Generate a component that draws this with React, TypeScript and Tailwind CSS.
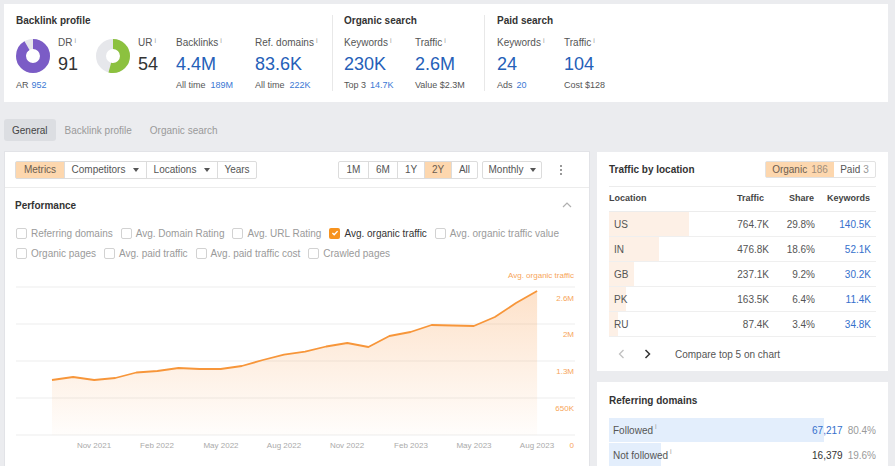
import React from "react";

function Info() {
  return <span className="align-top text-[7px] leading-[8px] ml-[2px] text-[#a0a0a0]">i</span>;
}

function Donut({ pct, color }: { pct: number; color: string }) {
  const r = 12;
  const c = 2 * Math.PI * r;
  return (
    <svg width="34" height="34" viewBox="0 0 34 34" className="shrink-0">
      <circle cx="17" cy="17" r={r} fill="none" stroke="#e6e7eb" strokeWidth="10" />
      <circle
        cx="17"
        cy="17"
        r={r}
        fill="none"
        stroke={color}
        strokeWidth="10"
        strokeDasharray={`${c * pct} ${c}`}
        transform="rotate(-90 17 17)"
      />
    </svg>
  );
}

function Tri() {
  return (
    <svg width="6" height="4" viewBox="0 0 6 4">
      <path d="M0 0H6L3 4Z" fill="#555" />
    </svg>
  );
}

function Metric({
  label,
  value,
  sub,
  w,
}: {
  label: string;
  value: string;
  sub: React.ReactNode;
  w: string;
}) {
  return (
    <div className={w}>
      <div className="text-[10px] leading-[12px] text-[#555]">
        {label}
        <Info />
      </div>
      <div className="mt-[4px] text-[18px] leading-[22px] text-[#2560b8]">{value}</div>
      <div className="mt-[4px] text-[9px] leading-[12px] text-[#555]">{sub}</div>
    </div>
  );
}

function Check({ label, checked }: { label: string; checked?: boolean }) {
  return (
    <div className="flex items-center gap-[4px]">
      {checked ? (
        <span className="w-[11px] h-[11px] rounded-[2px] bg-[#f7931e] flex items-center justify-center">
          <svg width="8" height="8" viewBox="0 0 8 8">
            <path d="M1.4 4.1 L3.2 5.8 L6.6 2.1" stroke="white" strokeWidth="1.4" fill="none" />
          </svg>
        </span>
      ) : (
        <span className="w-[11px] h-[11px] rounded-[2px] border border-[#d2d2d2] bg-white" />
      )}
      <span className={checked ? "text-[#333]" : "text-[#9a9a9a]"}>{label}</span>
    </div>
  );
}

const ys = [381, 378, 381, 379, 373.5, 372, 369, 370, 370, 367, 361, 355.6, 352.6, 347.5, 344, 348, 337, 333, 326, 326.5, 327, 318, 304, 292];

function Chart() {
  const pts = ys.map((y, i) => [47 + 21.09 * i, y - 263]);
  const line = pts.map((p, i) => `${i === 0 ? "M" : "L"}${p[0].toFixed(1)} ${p[1].toFixed(1)}`).join(" ");
  const area = `${line} L${pts[pts.length - 1][0].toFixed(1)} 173 L${pts[0][0].toFixed(1)} 173 Z`;
  const grid = [25, 62, 99, 136, 173];
  const yl = [
    ["2.6M", 39],
    ["2M", 75],
    ["1.3M", 112],
    ["650K", 149],
    ["0", 186],
  ];
  const xl = [
    ["Nov 2021", 89],
    ["Feb 2022", 152],
    ["May 2022", 216],
    ["Aug 2022", 279],
    ["Nov 2022", 342],
    ["Feb 2023", 406],
    ["May 2023", 469],
    ["Aug 2023", 532],
  ];
  return (
    <svg width="585" height="203" viewBox="0 0 585 203" style={{ fontFamily: "'Liberation Sans', Arial, sans-serif" }}>
      <defs>
        <linearGradient id="ag" x1="0" y1="25" x2="0" y2="173" gradientUnits="userSpaceOnUse">
          <stop offset="0" stopColor="#f9a155" stopOpacity="0.32" />
          <stop offset="1" stopColor="#f9a155" stopOpacity="0.02" />
        </linearGradient>
      </defs>
      {grid.map((g) => (
        <line key={g} x1="11" x2="570" y1={g} y2={g} stroke="#ededed" strokeWidth="1" />
      ))}
      <path d={area} fill="url(#ag)" />
      <path d={line} fill="none" stroke="#f7963a" strokeWidth="1.8" strokeLinejoin="round" />
      <text x="569" y="16" textAnchor="end" fontSize="8" fill="#f7a55a">
        Avg. organic traffic
      </text>
      {yl.map(([t, y]) => (
        <text key={t as string} x="569" y={y as number} textAnchor="end" fontSize="8" fill="#f7a55a">
          {t}
        </text>
      ))}
      {xl.map(([t, x]) => (
        <text key={t as string} x={x as number} y="186" textAnchor="middle" fontSize="8" fill="#aaaaaa">
          {t}
        </text>
      ))}
    </svg>
  );
}

const rows = [
  ["US", "764.7K", "29.8%", "140.5K", 29.8],
  ["IN", "476.8K", "18.6%", "52.1K", 18.6],
  ["GB", "237.1K", "9.2%", "30.2K", 9.2],
  ["PK", "163.5K", "6.4%", "11.4K", 6.4],
  ["RU", "87.4K", "3.4%", "34.8K", 3.4],
];

export default function App() {
  return (
    <div className="w-[895px] h-[466px] overflow-hidden bg-[#ebecef] px-[4px] pt-[4px] font-['Liberation_Sans',Arial,sans-serif] text-[#333]">
      {/* Top summary card */}
      <div className="w-[884px] h-[98px] bg-white flex pl-[12px] pt-[11px] pb-[11px]">
        <div className="w-[316px]">
          <div className="text-[10px] leading-[12px] font-bold text-[#333]">Backlink profile</div>
          <div className="flex mt-[10px]">
            <div className="w-[80px]">
              <div className="flex items-center gap-[8px] h-[38px]">
                <Donut pct={0.91} color="#7b5cc6" />
                <div>
                  <div className="text-[10px] leading-[12px] text-[#555]">
                    DR
                    <Info />
                  </div>
                  <div className="mt-[4px] text-[18px] leading-[22px] text-[#333]">91</div>
                </div>
              </div>
              <div className="mt-[4px] text-[9px] leading-[12px] text-[#555]">
                AR<span className="ml-[3px] text-[#3a78d4]">952</span>
              </div>
            </div>
            <div className="w-[80px]">
              <div className="flex items-center gap-[8px] h-[38px]">
                <Donut pct={0.54} color="#8cc13f" />
                <div>
                  <div className="text-[10px] leading-[12px] text-[#555]">
                    UR
                    <Info />
                  </div>
                  <div className="mt-[4px] text-[18px] leading-[22px] text-[#333]">54</div>
                </div>
              </div>
            </div>
            <Metric
              w="w-[79px]"
              label="Backlinks"
              value="4.4M"
              sub={
                <>
                  All time<span className="ml-[5px] text-[#3a78d4]">189M</span>
                </>
              }
            />
            <Metric
              w="w-[70px]"
              label="Ref. domains"
              value="83.6K"
              sub={
                <>
                  All time<span className="ml-[5px] text-[#3a78d4]">222K</span>
                </>
              }
            />
          </div>
        </div>
        <div className="w-[152px] border-l border-[#e8e8e8] pl-[11px]">
          <div className="text-[10px] leading-[12px] font-bold text-[#333]">Organic search</div>
          <div className="flex mt-[10px]">
            <Metric
              w="w-[72px]"
              label="Keywords"
              value="230K"
              sub={
                <>
                  Top 3<span className="ml-[4px] text-[#3a78d4]">14.7K</span>
                </>
              }
            />
            <Metric w="w-[70px]" label="Traffic" value="2.6M" sub="Value $2.3M" />
          </div>
        </div>
        <div className="border-l border-[#e8e8e8] pl-[12px]">
          <div className="text-[10px] leading-[12px] font-bold text-[#333]">Paid search</div>
          <div className="flex mt-[10px]">
            <Metric
              w="w-[67px]"
              label="Keywords"
              value="24"
              sub={
                <>
                  Ads<span className="ml-[4px] text-[#3a78d4]">20</span>
                </>
              }
            />
            <Metric w="w-[70px]" label="Traffic" value="104" sub="Cost $128" />
          </div>
        </div>
      </div>

      {/* Tabs */}
      <div className="flex mt-[17px] h-[22px] text-[10px]">
        <div className="px-[8px] flex items-center bg-[#dcdee2] rounded-[3px] text-[#444]">General</div>
        <div className="px-[9px] flex items-center text-[#9a9a9a]">Backlink profile</div>
        <div className="px-[9px] flex items-center text-[#9a9a9a]">Organic search</div>
      </div>

      {/* Main row */}
      <div className="flex gap-[7px] mt-[10px] items-start">
        {/* Left card */}
        <div className="w-[586px] h-[330px] bg-white border border-[#e2e3e7]">
          <div className="h-[36px] flex items-center border-b border-[#ececec] pl-[10px]">
            <div className="flex h-[18px] border border-[#dcdcdc] rounded-[2px] text-[10px] text-[#555]">
              <div className="w-[48px] bg-[#fdd7ae] flex items-center justify-center text-[#6b5d50]">Metrics</div>
              <div className="w-[82px] border-l border-[#dcdcdc] flex items-center justify-center gap-[8px]">
                Competitors
                <Tri />
              </div>
              <div className="w-[71px] border-l border-[#dcdcdc] flex items-center justify-center gap-[8px]">
                Locations
                <Tri />
              </div>
              <div className="w-[39px] border-l border-[#dcdcdc] flex items-center justify-center">Years</div>
            </div>
            <div className="ml-auto flex h-[18px] border border-[#dcdcdc] rounded-[2px] text-[10px] text-[#555]">
              <div className="w-[29px] flex items-center justify-center">1M</div>
              <div className="w-[29px] border-l border-[#dcdcdc] flex items-center justify-center">6M</div>
              <div className="w-[27px] border-l border-[#dcdcdc] flex items-center justify-center">1Y</div>
              <div className="w-[27px] border-l border-[#dcdcdc] bg-[#fdd7ae] flex items-center justify-center text-[#6b5d50]">2Y</div>
              <div className="w-[26px] border-l border-[#dcdcdc] flex items-center justify-center">All</div>
            </div>
            <div className="ml-[4px] w-[60px] h-[18px] border border-[#dcdcdc] rounded-[2px] text-[10px] text-[#555] flex items-center justify-center gap-[6px]">
              Monthly
              <Tri />
            </div>
            <div className="ml-[16px] mr-[25px] w-[6px] flex flex-col items-center gap-[2px]">
              <span className="w-[2px] h-[2px] rounded-full bg-[#777]" />
              <span className="w-[2px] h-[2px] rounded-full bg-[#777]" />
              <span className="w-[2px] h-[2px] rounded-full bg-[#777]" />
            </div>
          </div>
          <div className="h-[34px] flex items-center justify-between pl-[10px] pr-[17px]">
            <div className="text-[10px] font-bold text-[#333]">Performance</div>
            <svg width="10" height="6" viewBox="0 0 10 6">
              <path d="M1 5 L5 1 L9 5" stroke="#b0b0b0" strokeWidth="1.2" fill="none" />
            </svg>
          </div>
          <div className="flex items-center h-[20px] mt-[1px] pl-[11px] gap-[8px] text-[10px]">
            <Check label="Referring domains" />
            <Check label="Avg. Domain Rating" />
            <Check label="Avg. URL Rating" />
            <Check label="Avg. organic traffic" checked />
            <Check label="Avg. organic traffic value" />
          </div>
          <div className="flex items-center h-[20px] pl-[11px] gap-[8px] text-[10px]">
            <Check label="Organic pages" />
            <Check label="Avg. paid traffic" />
            <Check label="Avg. paid traffic cost" />
            <Check label="Crawled pages" />
          </div>
          <div className="-mt-[1px]">
            <Chart />
          </div>
        </div>

        {/* Right column */}
        <div className="w-[291px] flex flex-col gap-[11px] mt-[1px]">
          <div className="bg-white h-[219px] px-[12px]">
            <div className="h-[35px] flex items-center justify-between border-b border-[#ececec]">
              <div className="text-[10px] font-bold text-[#333]">Traffic by location</div>
              <div className="flex h-[17px] border border-[#e2e2e2] rounded-[2px] text-[10px]">
                <div className="w-[68px] bg-[#fdd7ae] flex items-center justify-center text-[#6b5d50]">
                  Organic<span className="ml-[4px] text-[#a08e7c]">186</span>
                </div>
                <div className="w-[41px] flex items-center justify-center text-[#555]">
                  Paid<span className="ml-[3px] text-[#999]">3</span>
                </div>
              </div>
            </div>
            <div className="h-[25px] flex items-center border-b border-[#ececec] text-[9px] font-bold text-[#444]">
              <div className="flex-1">Location</div>
              <div className="w-[50px] text-right pr-[4px]">Traffic</div>
              <div className="w-[46px] text-right">Share</div>
              <div className="w-[56px] text-right">Keywords</div>
              <div className="w-[6px]" />
            </div>
            {rows.map((r) => (
              <div key={r[0] as string} className="relative h-[25px] border-b border-[#efefef] flex items-center text-[10px] text-[#555]">
                <div className="absolute top-0 bottom-0 left-0 bg-[#fdf0e6]" style={{ width: `${r[4]}%` }} />
                <div className="relative flex-1 pl-[5px]">{r[0]}</div>
                <div className="relative w-[50px] text-right">{r[1]}</div>
                <div className="relative w-[46px] text-right">{r[2]}</div>
                <div className="relative w-[56px] text-right text-[#3570cc]">{r[3]}</div>
                <div className="w-[5px]" />
              </div>
            ))}
            <div className="h-[34px] flex items-center text-[10px] text-[#555]">
              <svg width="7" height="10" viewBox="0 0 7 10" className="ml-[9px]">
                <path d="M5.5 1 L1.5 5 L5.5 9" stroke="#c0c0c0" strokeWidth="1.3" fill="none" />
              </svg>
              <svg width="7" height="10" viewBox="0 0 7 10" className="ml-[19px]">
                <path d="M1.5 1 L5.5 5 L1.5 9" stroke="#333" strokeWidth="1.5" fill="none" />
              </svg>
              <span className="ml-[24px]">Compare top 5 on chart</span>
            </div>
          </div>

          <div className="bg-white h-[90px] px-[12px]">
            <div className="h-[36px] flex items-center text-[10px] font-bold text-[#333]">Referring domains</div>
            <div className="relative h-[24px] flex items-center text-[10px]">
              <div className="absolute top-0 bottom-0 left-0 bg-[#e3eefc]" style={{ width: "80.4%" }} />
              <span className="relative pl-[4px] text-[#555]">
                Followed
                <Info />
              </span>
              <span className="relative ml-auto text-[#3570cc]">67,217</span>
              <span className="relative ml-[5px] text-[#9a9a9a]">80.4%</span>
            </div>
            <div className="relative h-[24px] mt-[1px] flex items-center text-[10px]">
              <div className="absolute top-0 bottom-0 left-0 bg-[#e3eefc]" style={{ width: "19.6%" }} />
              <span className="relative pl-[4px] text-[#555]">
                Not followed
                <Info />
              </span>
              <span className="relative ml-auto text-[#333]">16,379</span>
              <span className="relative ml-[5px] text-[#9a9a9a]">19.6%</span>
            </div>
          </div>
        </div>
      </div>
    </div>
  );
}
